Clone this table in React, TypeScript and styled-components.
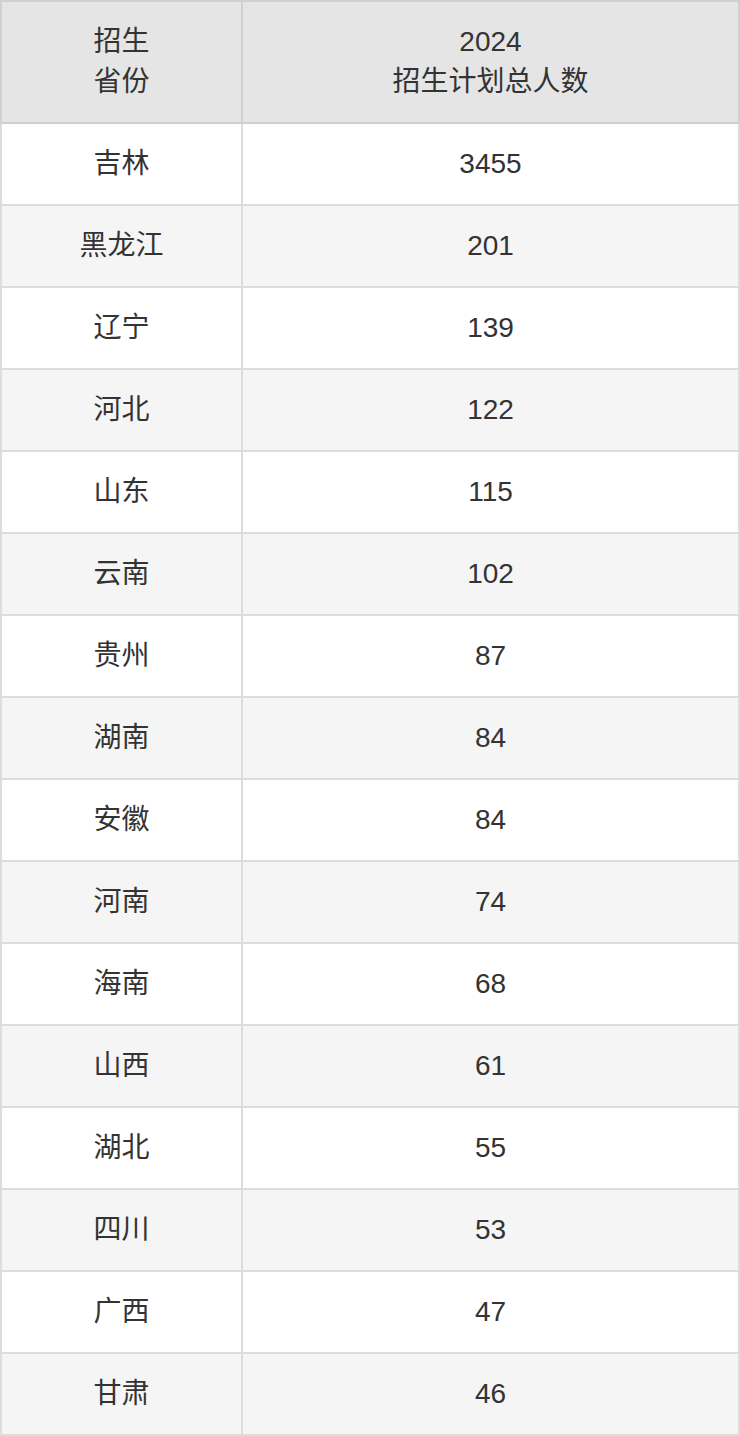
import React from "react";
import styled, { createGlobalStyle } from "styled-components";

const GlobalStyle = createGlobalStyle`
  html, body { margin: 0; padding: 0; background: #ffffff; }
  body { font-family: "Liberation Sans", "Noto Sans CJK SC", sans-serif; }
`;

const Table = styled.table`
  width: 740px;
  border-collapse: collapse;
  table-layout: fixed;
  font-family: "Liberation Sans", "Noto Sans CJK SC", sans-serif;
  font-size: 28px;
  color: #333333;
`;

const HeadCell = styled.th<{ $wide?: boolean }>`
  width: ${(p) => (p.$wide ? "auto" : "239px")};
  height: 120px;
  padding: 0;
  background: #e5e5e5;
  border: 2px solid #d0d0d0;
  font-weight: 400;
  line-height: 40px;
  text-align: center;
  vertical-align: middle;
`;

const Row = styled.tr<{ $striped: boolean }>`
  background: ${(p) => (p.$striped ? "#f5f5f5" : "#ffffff")};
`;

const Cell = styled.td`
  height: 80px;
  padding: 0;
  border: 2px solid #dcdcdc;
  text-align: center;
  vertical-align: middle;
  line-height: 40px;
`;

const rows: [string, number][] = [
  ["吉林", 3455],
  ["黑龙江", 201],
  ["辽宁", 139],
  ["河北", 122],
  ["山东", 115],
  ["云南", 102],
  ["贵州", 87],
  ["湖南", 84],
  ["安徽", 84],
  ["河南", 74],
  ["海南", 68],
  ["山西", 61],
  ["湖北", 55],
  ["四川", 53],
  ["广西", 47],
  ["甘肃", 46],
];

export default function App() {
  return (
    <>
      <GlobalStyle />
      <Table>
        <thead>
          <tr>
            <HeadCell>
              招生
              <br />
              省份
            </HeadCell>
            <HeadCell $wide>
              2024
              <br />
              招生计划总人数
            </HeadCell>
          </tr>
        </thead>
        <tbody>
          {rows.map(([name, n], i) => (
            <Row key={name + i} $striped={i % 2 === 1}>
              <Cell>{name}</Cell>
              <Cell>{n}</Cell>
            </Row>
          ))}
        </tbody>
      </Table>
    </>
  );
}
